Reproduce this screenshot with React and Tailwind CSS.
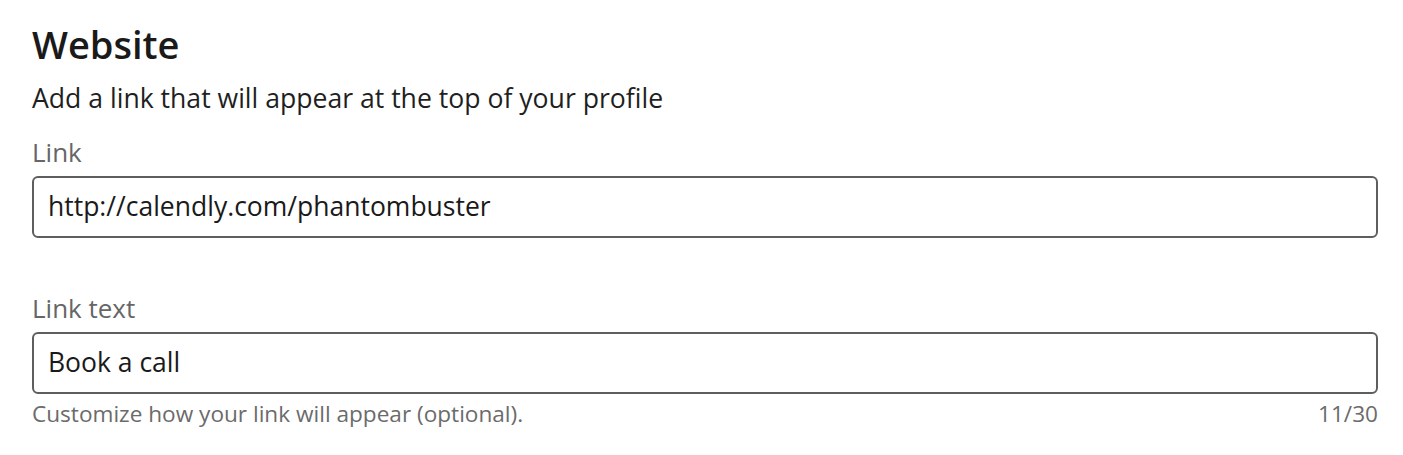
import React from 'react';

const Field = ({ label, value, helper, count }) => (
  <div>
    <label className="block text-[26px] leading-[36px] text-[#666666]">{label}</label>
    <div className="mt-[6px] h-[62px] rounded-[6px] border-2 border-[#5e5e5e] flex items-center px-[14px]">
      <span className="text-[26.5px] text-[#1a1a1a]">{value}</span>
    </div>
    {helper && (
      <div className="mt-[6px] flex justify-between text-[22.6px] leading-[28px] text-[#6b6b6b]">
        <span>{helper}</span>
        <span>{count}</span>
      </div>
    )}
  </div>
);

export default function App() {
  return (
    <div
      className="bg-white w-[1403px] h-[455px] pl-[32px] pr-[25px] pt-[20px]"
      style={{ fontFamily: '"Segoe UI", "Open Sans", sans-serif' }}
    >
      <h2 className="text-[38px] leading-[48px] font-semibold text-[#1a1a1a]">Website</h2>
      <p className="mt-[12px] text-[26.6px] leading-[36px] text-[#1f1f1f]">
        Add a link that will appear at the top of your profile
      </p>
      <div className="mt-[18px]">
        <Field label="Link" value="http://calendly.com/phantombuster" />
      </div>
      <div className="mt-[52px]">
        <Field
          label="Link text"
          value="Book a call"
          helper="Customize how your link will appear (optional)."
          count="11/30"
        />
      </div>
    </div>
  );
}
